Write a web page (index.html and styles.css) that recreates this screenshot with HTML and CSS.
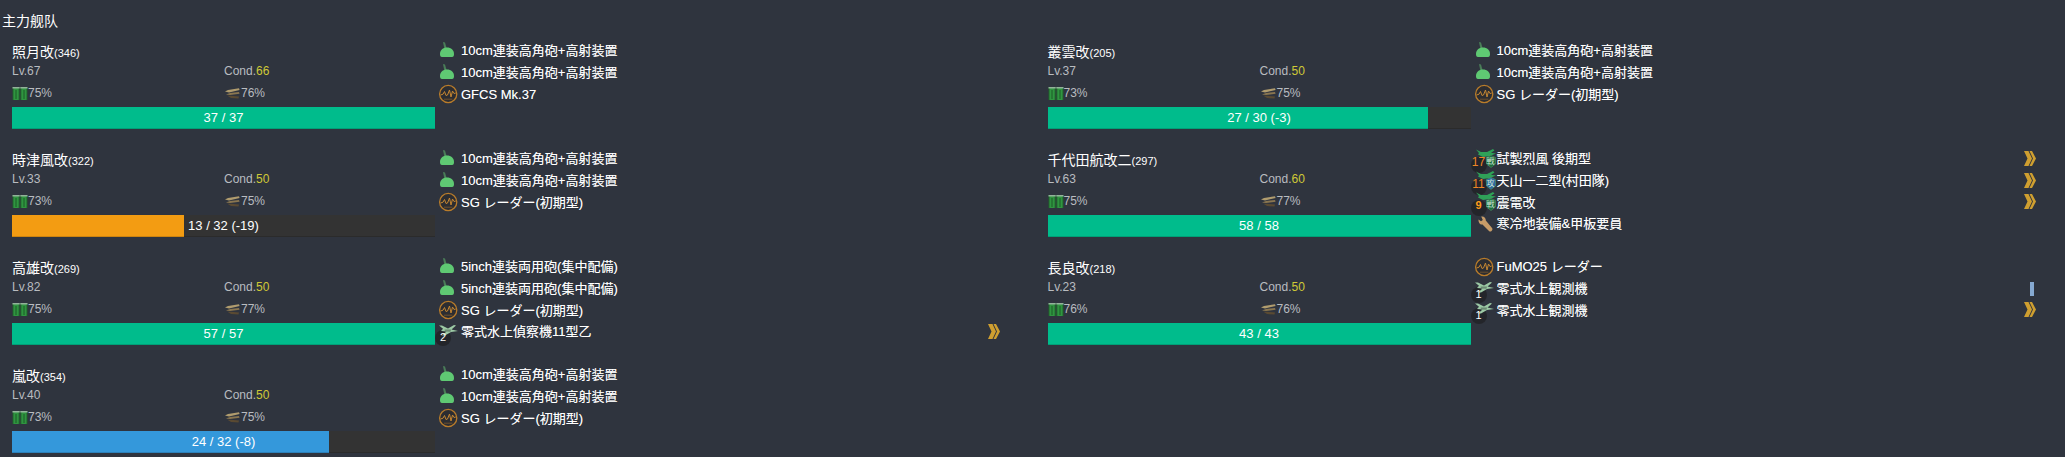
FILE: index.html
```html
<!DOCTYPE html>
<html lang="ja">
<head>
<meta charset="utf-8">
<title>主力舰队</title>
<link rel="stylesheet" href="styles.css">
</head>
<body>
<svg class="defs" width="0" height="0" aria-hidden="true">
  <defs>
    <linearGradient id="barrel" x1="0" x2="1" y1="0" y2="0">
      <stop offset="0" stop-color="#1f5c2a"/>
      <stop offset=".25" stop-color="#2f9540"/>
      <stop offset=".75" stop-color="#2f9540"/>
      <stop offset="1" stop-color="#1f5c2a"/>
    </linearGradient>
    <symbol id="gun" viewBox="0 0 20 20">
      <path d="M5 1 L7 1.5 L9 8.5 L6.5 8.5 Z" fill="#4a7d58"/>
      <path d="M2 13 C2 9 5 6.5 9 6.5 C13 6.5 16 9 16 13 C16 15 15.5 16 14 16 L4 16 C2.5 16 2 15 2 13 Z" fill="#5fc973"/>
    </symbol>
    <symbol id="radar" viewBox="0 0 20 20">
      <circle cx="10.2" cy="10" r="8.6" fill="#2c2d31" stroke="#b97c2a" stroke-width="1.3"/>
      <path d="M2.5 11 L5 10.2 L6.5 7.5 L8 11.5 L9.5 11 L11.5 6 L13 13 L14.5 7 L16 9.5 L17.8 9" fill="none" stroke="#c48632" stroke-width="1"/>
      <path d="M6 15.2 H14.4" stroke="#7d5a2e" stroke-width=".8"/>
    </symbol>
    <symbol id="plane" viewBox="0 0 19 11">
      <path d="M0 .5 L3 .5 L9 3.5 L15 0 L17 .5 L12.5 4.5 L19 6 L12 7 L6 10.5 L3 10.5 L7.5 6.5 L2 6 L4 3.8 Z" fill="#9cc9a5"/>
      <path d="M5.5 4.5 L12 4.6 L11.5 6.8 L6 6.6 Z" fill="#6b8a73"/>
    </symbol>
    <symbol id="fighter" viewBox="0 0 20 8">
      <path d="M0 .5 L5 3 L11 3 L17 0 L18.5 1.5 L15 3.8 L20 4.5 L14 7 L7 8 L2 5.5 L3 4 Z" fill="#2fa158"/>
    </symbol>
    <symbol id="shield" viewBox="0 0 10 13">
      <path d="M5 .5 L9.5 2.5 V9 L5 12.5 L.5 9 V2.5 Z" fill="currentColor" stroke="#4c9a6a" stroke-width=".6"/>
    </symbol>
    <symbol id="wrench" viewBox="0 0 20 20">
      <path d="M4.5 5.5 L7 7.2 L8.8 6 L7.2 2.6 C9.8 2 12 3.8 11.8 6.5 L18 14 C19.5 16 16.8 18.8 15 17 L8.5 10.5 C6 11 4.3 8.5 4.5 5.5 Z" fill="#c79c68"/>
    </symbol>
    <symbol id="fuel" viewBox="0 0 16 14">
      <rect x=".5" y="1" width="7.2" height="13" fill="url(#barrel)"/>
      <rect x="8.3" y="1" width="7.2" height="13" fill="url(#barrel)"/>
      <path d="M.5 1.7 H7.7 M8.3 1.7 H15.5" stroke="#93b39a" stroke-width="1.4"/>
      <path d="M4 4 V13 M12 4 V13" stroke="#1c5a26" stroke-width="1"/>
    </symbol>
    <symbol id="ammo" viewBox="0 0 15 11">
      <path d="M0 3.5 L3 2 L14 .2 L14.6 2 L4 4.4 Z" fill="#b09c6e"/>
      <path d="M1 6.4 L5 5 L14 4 L14.6 5.8 L5 7 Z" fill="#8a7650"/>
      <path d="M2.5 7.8 L6 7.8 L14 8.4 L13.5 10.6 L6 10 Z" fill="#5a4a32"/>
    </symbol>
    <symbol id="chev" viewBox="0 0 12 15">
      <path d="M0 0 H4.5 L8 7.5 L4.5 15 H0 L3.5 7.5 Z M5.5 0 H8 L12 7.5 L8 15 H5.5 L9 7.5 Z" fill="#cf9f30"/>
    </symbol>
  </defs>
</svg>

<main class="page">
  <h1 class="fleet-title">主力舰队</h1>
  <div class="fleet">

    <section class="ship">
      <div class="info">
        <div class="name">照月改<small>(346)</small></div>
        <div class="stats"><span>Lv.67</span><span>Cond.<b>66</b></span></div>
        <div class="stats"><span class="res"><svg class="fuel"><use href="#fuel"/></svg>75%</span><span class="res"><svg class="ammo"><use href="#ammo"/></svg>76%</span></div>
        <div class="hp"><div class="fill green" style="width:100%"></div><div class="hp-text">37 / 37</div></div>
      </div>
      <ul class="slots">
        <li><svg class="ic"><use href="#gun"/></svg>10cm連装高角砲+高射装置</li>
        <li><svg class="ic"><use href="#gun"/></svg>10cm連装高角砲+高射装置</li>
        <li><svg class="ic"><use href="#radar"/></svg>GFCS Mk.37</li>
      </ul>
    </section>

    <section class="ship">
      <div class="info">
        <div class="name">叢雲改<small>(205)</small></div>
        <div class="stats"><span>Lv.37</span><span>Cond.<b>50</b></span></div>
        <div class="stats"><span class="res"><svg class="fuel"><use href="#fuel"/></svg>73%</span><span class="res"><svg class="ammo"><use href="#ammo"/></svg>75%</span></div>
        <div class="hp"><div class="fill green" style="width:90%"></div><div class="hp-text">27 / 30 (-3)</div></div>
      </div>
      <ul class="slots">
        <li><svg class="ic"><use href="#gun"/></svg>10cm連装高角砲+高射装置</li>
        <li><svg class="ic"><use href="#gun"/></svg>10cm連装高角砲+高射装置</li>
        <li><svg class="ic"><use href="#radar"/></svg>SG レーダー(初期型)</li>
      </ul>
    </section>

    <section class="ship">
      <div class="info">
        <div class="name">時津風改<small>(322)</small></div>
        <div class="stats"><span>Lv.33</span><span>Cond.<b>50</b></span></div>
        <div class="stats"><span class="res"><svg class="fuel"><use href="#fuel"/></svg>73%</span><span class="res"><svg class="ammo"><use href="#ammo"/></svg>75%</span></div>
        <div class="hp"><div class="fill orange" style="width:40.6%"></div><div class="hp-text">13 / 32 (-19)</div></div>
      </div>
      <ul class="slots">
        <li><svg class="ic"><use href="#gun"/></svg>10cm連装高角砲+高射装置</li>
        <li><svg class="ic"><use href="#gun"/></svg>10cm連装高角砲+高射装置</li>
        <li><svg class="ic"><use href="#radar"/></svg>SG レーダー(初期型)</li>
      </ul>
    </section>

    <section class="ship">
      <div class="info">
        <div class="name">千代田航改二<small>(297)</small></div>
        <div class="stats"><span>Lv.63</span><span>Cond.<b>60</b></span></div>
        <div class="stats"><span class="res"><svg class="fuel"><use href="#fuel"/></svg>75%</span><span class="res"><svg class="ammo"><use href="#ammo"/></svg>77%</span></div>
        <div class="hp"><div class="fill green" style="width:100%"></div><div class="hp-text">58 / 58</div></div>
      </div>
      <ul class="slots">
        <li><span class="ic air"><svg class="fighter"><use href="#fighter"/></svg><svg class="shield g"><use href="#shield"/></svg><i class="sk">戦</i><em class="cnt hi">17</em></span>試製烈風 後期型<svg class="chev"><use href="#chev"/></svg></li>
        <li><span class="ic air"><svg class="fighter"><use href="#fighter"/></svg><svg class="shield b"><use href="#shield"/></svg><i class="sk">攻</i><em class="cnt hi">11</em></span>天山一二型(村田隊)<svg class="chev"><use href="#chev"/></svg></li>
        <li><span class="ic air"><svg class="fighter"><use href="#fighter"/></svg><svg class="shield g"><use href="#shield"/></svg><i class="sk">戦</i><em class="cnt hi2">9</em></span>震電改<svg class="chev"><use href="#chev"/></svg></li>
        <li><svg class="ic"><use href="#wrench"/></svg>寒冷地装備&amp;甲板要員</li>
      </ul>
    </section>

    <section class="ship">
      <div class="info">
        <div class="name">高雄改<small>(269)</small></div>
        <div class="stats"><span>Lv.82</span><span>Cond.<b>50</b></span></div>
        <div class="stats"><span class="res"><svg class="fuel"><use href="#fuel"/></svg>75%</span><span class="res"><svg class="ammo"><use href="#ammo"/></svg>77%</span></div>
        <div class="hp"><div class="fill green" style="width:100%"></div><div class="hp-text">57 / 57</div></div>
      </div>
      <ul class="slots">
        <li><svg class="ic"><use href="#gun"/></svg>5inch連装両用砲(集中配備)</li>
        <li><svg class="ic"><use href="#gun"/></svg>5inch連装両用砲(集中配備)</li>
        <li><svg class="ic"><use href="#radar"/></svg>SG レーダー(初期型)</li>
        <li><span class="ic air"><svg class="seaplane"><use href="#plane"/></svg><em class="cnt">2</em></span>零式水上偵察機11型乙<svg class="chev"><use href="#chev"/></svg></li>
      </ul>
    </section>

    <section class="ship">
      <div class="info">
        <div class="name">長良改<small>(218)</small></div>
        <div class="stats"><span>Lv.23</span><span>Cond.<b>50</b></span></div>
        <div class="stats"><span class="res"><svg class="fuel"><use href="#fuel"/></svg>76%</span><span class="res"><svg class="ammo"><use href="#ammo"/></svg>76%</span></div>
        <div class="hp"><div class="fill green" style="width:100%"></div><div class="hp-text">43 / 43</div></div>
      </div>
      <ul class="slots">
        <li><svg class="ic"><use href="#radar"/></svg>FuMO25 レーダー</li>
        <li><span class="ic air"><svg class="seaplane"><use href="#plane"/></svg><em class="cnt">1</em></span>零式水上観測機<i class="rank1"></i></li>
        <li><span class="ic air"><svg class="seaplane"><use href="#plane"/></svg><em class="cnt">1</em></span>零式水上観測機<svg class="chev"><use href="#chev"/></svg></li>
      </ul>
    </section>

    <section class="ship">
      <div class="info">
        <div class="name">嵐改<small>(354)</small></div>
        <div class="stats"><span>Lv.40</span><span>Cond.<b>50</b></span></div>
        <div class="stats"><span class="res"><svg class="fuel"><use href="#fuel"/></svg>73%</span><span class="res"><svg class="ammo"><use href="#ammo"/></svg>75%</span></div>
        <div class="hp"><div class="fill blue" style="width:75%"></div><div class="hp-text">24 / 32 (-8)</div></div>
      </div>
      <ul class="slots">
        <li><svg class="ic"><use href="#gun"/></svg>10cm連装高角砲+高射装置</li>
        <li><svg class="ic"><use href="#gun"/></svg>10cm連装高角砲+高射装置</li>
        <li><svg class="ic"><use href="#radar"/></svg>SG レーダー(初期型)</li>
      </ul>
    </section>

  </div>
</main>
</body>
</html>
```

FILE: styles.css
```css
* { box-sizing: border-box; }
html, body { margin: 0; height: 100%; }
body {
  background: #2f343e;
  color: #fff;
  font-family: "Liberation Sans", "Noto Sans CJK JP", sans-serif;
  font-size: 13px;
  overflow: hidden;
}
.defs { position: absolute; }
.page { padding: 13px 0 0 2px; }
.fleet-title { margin: 0; font-size: 14px; font-weight: 400; line-height: 16px; }
.fleet {
  display: grid;
  grid-template-columns: repeat(2, 1035.5px);
  grid-auto-rows: 108px;
  margin-top: 4px;
}
.ship { display: flex; padding-left: 10px; }
.info { width: 423px; flex: none; padding-top: 9px; }
.name { height: 18px; line-height: 20px; font-size: 14px; }
.name small { font-size: 11px; }
.stats { display: grid; grid-template-columns: 212px 1fr; height: 22px; align-items: center; color: #b9bcc0; font-size: 12px; }
.stats b { color: #cfc936; font-weight: 400; }
.res { display: flex; align-items: center; }
.fuel { width: 16px; height: 14px; }
.ammo { width: 15px; height: 11px; margin: 0 1px; }
.hp {
  position: relative;
  height: 22px;
  margin-top: 3px;
  background: #333;
  box-shadow: inset 0 -1px 0 rgba(0,0,0,.15);
}
.fill { height: 100%; box-shadow: inset 0 -1px 0 rgba(0,0,0,.15); }
.green { background: #00bc8c; }
.orange { background: #f39c12; }
.blue { background: #3498db; }
.hp-text { position: absolute; inset: 0; text-align: center; line-height: 21px; font-size: 13px; }
.slots { list-style: none; margin: 0; padding: 7px 0 0 2px; width: 600px; flex: none; }
.slots li { display: flex; align-items: center; height: 21.7px; position: relative; line-height: 21px; text-shadow: 0 0 .6px rgba(255,255,255,.5); }
svg.ic { width: 20px; height: 20px; margin-right: 3px; margin-left: 1px; flex: none; }
.ic.air { position: relative; display: block; width: 20px; height: 20px; margin-right: 4px; flex: none; text-shadow: none; }
.ic.air::before {
  content: "";
  position: absolute; left: -2px; top: 8px; width: 16px; height: 16px;
  border-radius: 50%; background: rgba(28,28,30,.6);
}
.seaplane { position: absolute; left: 2px; top: 3px; width: 19px; height: 11px; }
.fighter { position: absolute; left: 3px; top: 0; width: 20px; height: 8px; }
.shield { position: absolute; left: 13px; top: 6px; width: 10px; height: 13px; }
.shield.g { color: #1c6b3c; }
.shield.b { color: #2c6aa3; }
.sk { position: absolute; left: 14px; top: 8px; font-size: 8px; line-height: 9px; font-style: normal; color: #cfe6d6; }
.cnt {
  position: absolute; left: -2px; top: 10px; width: 16px; height: 11px;
  font-style: normal; font-size: 11px; line-height: 11px; text-align: center; color: #fff;
}
.cnt.hi { top: 8px; color: #ee8625; font-size: 12px; }
.cnt.hi2 { top: 8px; color: #ff9c1a; font-weight: 700; }
.chev { position: absolute; right: 35px; top: 3px; width: 12px; height: 15px; }
.rank1 { position: absolute; right: 36.5px; top: 4px; width: 4px; height: 14px; background: #86a9d1; }
```
